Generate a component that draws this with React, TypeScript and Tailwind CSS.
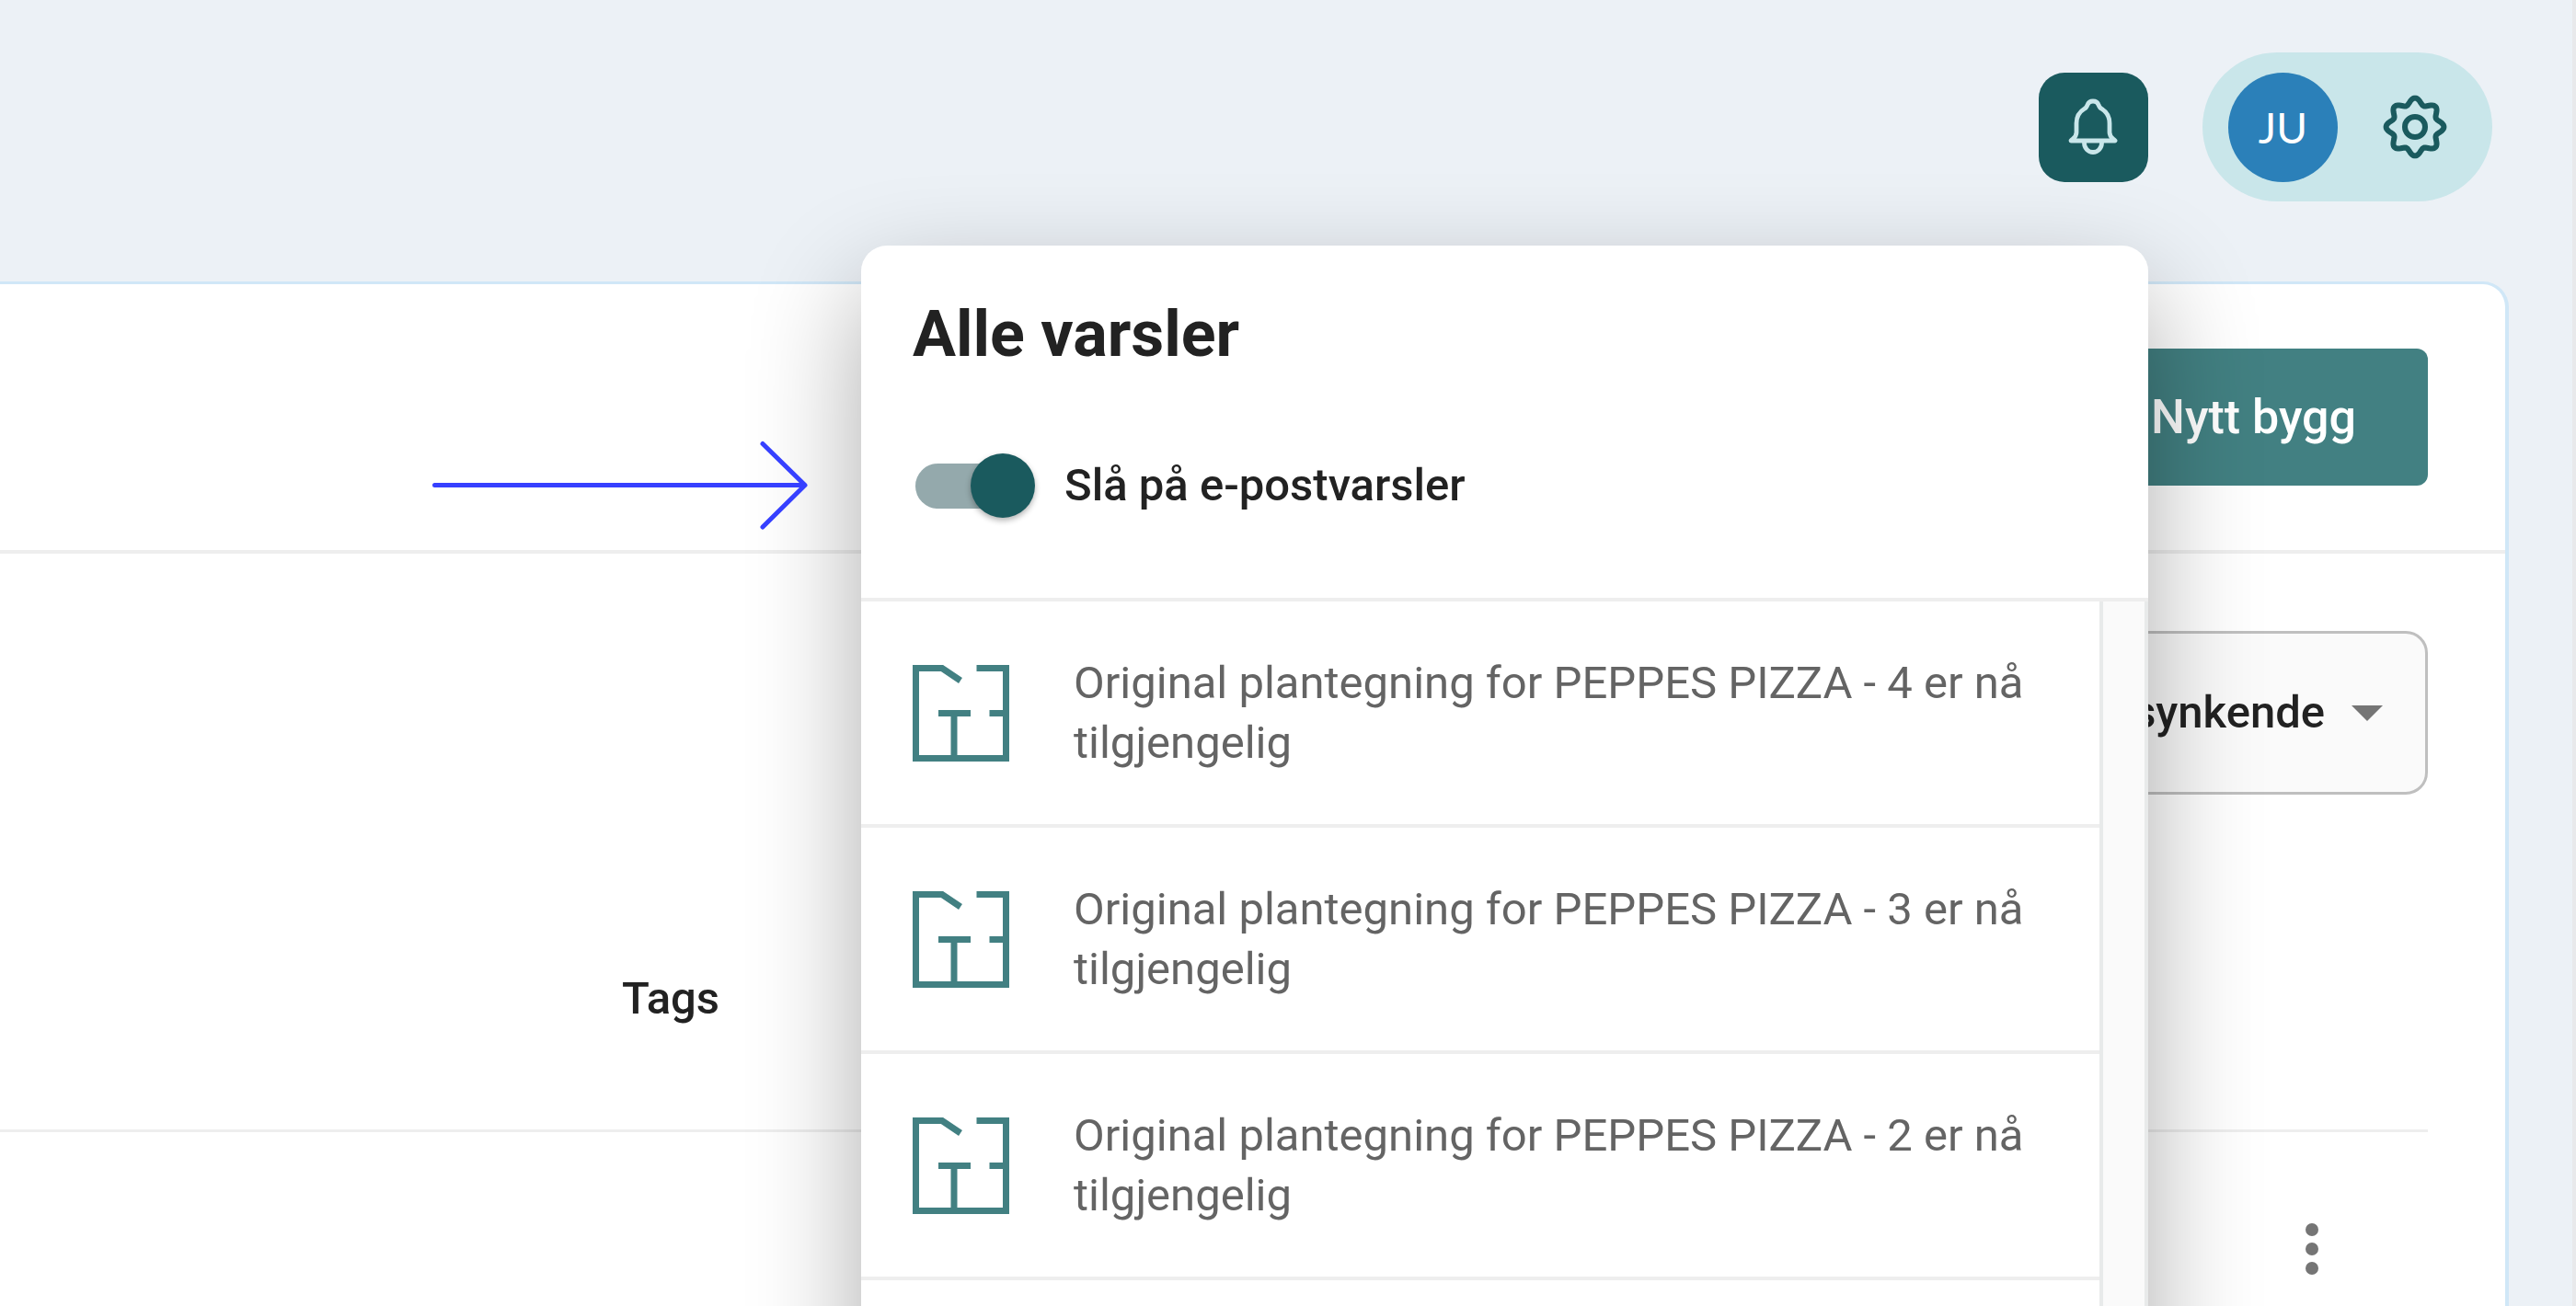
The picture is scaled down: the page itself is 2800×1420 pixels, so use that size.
import { useState } from "react";

const notifications = [
  "Original plantegning for PEPPES PIZZA - 4 er nå tilgjengelig",
  "Original plantegning for PEPPES PIZZA - 3 er nå tilgjengelig",
  "Original plantegning for PEPPES PIZZA - 2 er nå tilgjengelig",
];

/* Eight-lobed outline of the settings wheel. */
const gearOutline =
  Array.from({ length: 160 }, (_, i) => {
    const angle = (i / 160) * Math.PI * 2;
    const r = 28 + 3.4 * Math.cos(8 * angle);
    const x = (36 + r * Math.cos(angle)).toFixed(2);
    const y = (36 + r * Math.sin(angle)).toFixed(2);
    return `${i === 0 ? "M" : "L"}${x} ${y}`;
  }).join("") + "Z";

function BellIcon() {
  return (
    <svg viewBox="0 0 119 119" className="size-full" fill="none" stroke="#c9e6ea" strokeWidth="4.8" strokeLinejoin="round" aria-hidden="true">
      <path d="M35 74C38 71 41 70 41 65V55C41 47 45 42 50 39C52 38 52 37 53 35C54 32 56 31 59 31C62 31 64 32 65 35C66 37 66 38 68 39C73 42 77 47 77 55V65C77 70 80 71 83 74Z" />
      <path d="M49.500 74v2.500a9.500 10 0 0 0 19 0V74" />
    </svg>
  );
}

function GearIcon() {
  return (
    <svg viewBox="0 0 72 72" className="size-[72px]" fill="none" stroke="#1a5a5e" strokeWidth="6" strokeLinejoin="round" aria-hidden="true">
      <path d={gearOutline} />
      <circle cx="36" cy="36" r="11" />
    </svg>
  );
}

function FloorPlanIcon() {
  return (
    <svg viewBox="0 0 105 105" className="size-[105px] shrink-0" fill="none" stroke="#428082" strokeWidth="7" aria-hidden="true">
      <path d="M52 17L32 3.500H3.500V101.500H101.500V3.500H69.500" />
      <path d="M28 52.500H63M45 52.500V101M83.500 52.500H101" />
    </svg>
  );
}

function NotificationPanel() {
  const [enabled, setEnabled] = useState(true);
  return (
    <section
      aria-label="Alle varsler"
      className="absolute top-[188px] right-0 flex min-h-screen w-[1399px] flex-col overflow-hidden rounded-t-[28px] bg-white shadow-[0_48px_120px_rgba(0,0,0,0.33)]"
    >
      <div className="flex flex-col gap-[72px] border-b-4 border-[#eeeeee] px-14 pt-14 pb-[69px]">
        <h2 className="text-[70px] leading-[80px] font-bold text-[#222222]">Alle varsler</h2>
        <label className="flex h-[106px] items-center gap-8 text-[49px] font-medium text-[#222222]">
          <span className="relative ml-[3px] flex h-[49px] w-[130px] items-center">
            <input
              type="checkbox"
              role="switch"
              checked={enabled}
              onChange={(e) => setEnabled(e.target.checked)}
              className="peer h-[49px] w-[120px] appearance-none rounded-full bg-[#94a9ac]"
            />
            <span className="pointer-events-none absolute left-0 size-[70px] rounded-full bg-[#1a5a5e] shadow-[0_3px_6px_rgba(0,0,0,0.3)] peer-checked:right-0 peer-checked:left-auto" />
          </span>
          Slå på e-postvarsler
        </label>
      </div>
      <div className="flex flex-1">
        <ul className="flex-1">
          {notifications.map((text) => (
            <li key={text} className="flex h-[246px] items-center gap-[70px] border-b-4 border-[#eeeeee] px-14">
              <FloorPlanIcon />
              <p className="text-[49px] leading-[65px] text-[#646464]">{text}</p>
            </li>
          ))}
        </ul>
        <div className="w-[53px] border-x-4 border-[#e8eaea] bg-[#fafafa]" />
      </div>
    </section>
  );
}

function PointerArrow() {
  return (
    <svg
      viewBox="0 0 412 100"
      className="pointer-events-none absolute top-[478px] left-[468px] z-20 h-[100px] w-[412px]"
      fill="none"
      stroke="#3640ff"
      strokeWidth="5"
      strokeLinecap="round"
      strokeLinejoin="round"
      aria-hidden="true"
    >
      <path d="M4.500 49.500H406M361 4.500L407 49.500L361 95" />
    </svg>
  );
}

export default function App() {
  return (
    <div className="relative flex h-screen flex-col overflow-hidden border-r-4 border-[#e8e9eb] bg-[#ecf1f6] font-[Roboto,sans-serif] text-[#222222]">
      <header className="relative z-10 flex items-start justify-end gap-[59px] pt-[57px] pr-[87px]">
        <div className="relative mt-[22px]">
          <button type="button" aria-label="Varsler" className="relative z-10 block size-[119px] rounded-[28px] bg-[#1a5a5e]">
            <BellIcon />
          </button>
          <NotificationPanel />
        </div>
        <div className="relative z-10 flex h-[162px] w-[315px] items-center justify-between rounded-full bg-[#c9e6ea] pr-12 pl-7">
          <span className="flex size-[119px] items-center justify-center rounded-full bg-[#2b80b9] font-[Lato,sans-serif] text-[46px] text-white">JU</span>
          <button type="button" aria-label="Innstillinger">
            <GearIcon />
          </button>
        </div>
      </header>

      <main className="mt-[87px] mr-[69px] flex-1 rounded-tr-[28px] border-t-[3px] border-r-4 border-[#d0e7f7] bg-white">
        <div className="flex h-[293px] items-center justify-end border-b-4 border-[#eeeeee] pr-[84px]">
          <button type="button" className="h-[149px] rounded-xl bg-[#428082] px-[78px] text-[52px] font-medium text-white">
            Nytt bygg
          </button>
        </div>
        <div className="flex justify-end pt-[84px] pr-[84px] pb-20">
          <div className="relative flex items-center">
            <select
              aria-label="Sortering"
              className="h-[178px] appearance-none rounded-3xl border-[3px] border-[#bfbfbf] bg-[#fafafa] pr-[108px] pl-12 text-[49px] font-medium text-[#222222]"
            >
              <option>Dato synkende</option>
            </select>
            <svg viewBox="0 0 34 17" className="pointer-events-none absolute right-[49px] h-[17px] w-[34px]" fill="#757575" aria-hidden="true">
              <path d="M0 0H34L17 17Z" />
            </svg>
          </div>
        </div>
        <div className="pr-[84px]">
          <table className="w-full table-fixed border-collapse text-[49px]">
            <thead>
              <tr className="h-[285px] border-b-[3px] border-[#eeeeee]">
                <td className="w-[676px]" />
                <th scope="col" className="text-left font-medium">
                  Tags
                </th>
                <td className="w-[252px]" />
              </tr>
            </thead>
            <tbody>
              <tr className="h-[250px]">
                <td />
                <td />
                <td className="text-center">
                  <button type="button" aria-label="Flere valg" className="inline-flex flex-col gap-[7px] align-middle">
                    <span className="size-[14px] rounded-full bg-[#757575]" />
                    <span className="size-[14px] rounded-full bg-[#757575]" />
                    <span className="size-[14px] rounded-full bg-[#757575]" />
                  </button>
                </td>
              </tr>
            </tbody>
          </table>
        </div>
      </main>

      <PointerArrow />
    </div>
  );
}
